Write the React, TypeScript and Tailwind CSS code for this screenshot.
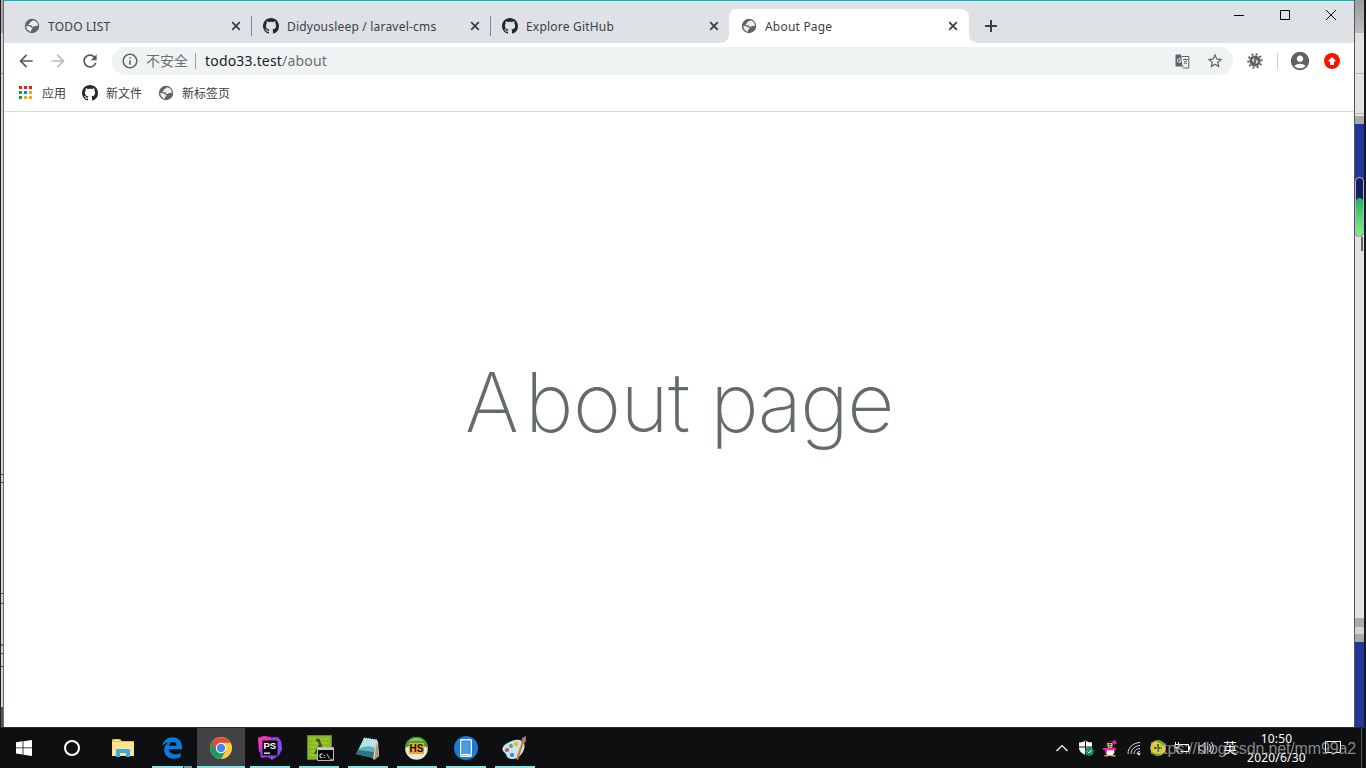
import React from 'react';
import {
    MdArrowBack,
    MdArrowForward,
    MdRefresh,
    MdInfoOutline,
    MdStarBorder,
    MdAccountCircle,
} from 'react-icons/md';

type Favicon = 'globe' | 'github';

interface TabItem {
    title: string;
    icon: Favicon;
    active?: boolean;
    divider?: boolean;
}

const tabs: TabItem[] = [
    { title: 'TODO LIST', icon: 'globe', divider: true },
    { title: 'Didyousleep / laravel-cms', icon: 'github', divider: true },
    { title: 'Explore GitHub', icon: 'github' },
    { title: 'About Page', icon: 'globe', active: true },
];

const appDots = [
    'bg-[#f51b0c]', 'bg-[#f51b0c]', 'bg-[#f51b0c]',
    'bg-[#0f9d58]', 'bg-[#0a84ff]', 'bg-[#ffa800]',
    'bg-[#0f9d58]', 'bg-[#ffa800]', 'bg-[#ffa800]',
];

const SiteIcon = ({ icon }: { icon: Favicon }) =>
    icon === 'globe' ? (
        <svg className="shrink-0" width="16" height="16" viewBox="0 0 16 16">
            <circle cx="8" cy="8" r="7.2" fill="#5f6368" />
            <path
                d="M8.800 2.300c-.3 1-1.300 1.200-2 1.500-.9.400-.6 1.200-1.100 1.600-.5.500-1.300.5-1.200 1.300.1.700 1.300.5 2.300.6 1.300.1 1.100 1.500 2 1.600 1.300.2 1.300-1 2.500-1h2.500c.5-2.600-1.700-5.100-5-5.600zM2.300 8c0 3.100 2.100 5.300 4.700 5.700V12c1.200-.2 1.600-1.200 1.300-1.900-.3-.7-1.200-.5-1.700-1C5.700 8.200 4.400 8 2.300 8z"
                fill="#eceef0"
            />
        </svg>
    ) : (
        <svg className="shrink-0" width="16" height="16" viewBox="0 0 16 16" fill="#24292e">
            <path d="M8 0C3.580 0 0 3.580 0 8c0 3.540 2.290 6.530 5.470 7.590.4.070.55-.17.55-.38 0-.19-.01-.82-.01-1.490-2.010.37-2.530-.49-2.690-.94-.09-.23-.48-.94-.82-1.130-.28-.15-.68-.52-.01-.53.63-.01 1.080.58 1.230.82.72 1.210 1.870.87 2.330.66.070-.52.28-.87.51-1.070-1.780-.2-3.640-.89-3.640-3.950 0-.87.31-1.590.82-2.150-.08-.2-.36-1.020.08-2.120 0 0 .67-.21 2.200.82.64-.18 1.320-.27 2-.27.68 0 1.360.09 2 .27 1.530-1.040 2.200-.82 2.200-.82.44 1.100.16 1.920.08 2.120.51.56.82 1.270.82 2.150 0 3.070-1.870 3.750-3.650 3.950.29.25.54.73.54 1.480 0 1.070-.01 1.930-.01 2.200 0 .21.15.46.55.38A8.013 8.013 0 0016 8c0-4.420-3.580-8-8-8z" />
        </svg>
    );

const CloseIcon = () => (
    <svg width="10" height="10" viewBox="0 0 10 10" stroke="#3c4043" strokeWidth="1.8">
        <path d="M1.2 1.2l7.6 7.6M8.8 1.2L1.2 8.8" />
    </svg>
);

const Tab = ({ tab }: { tab: TabItem }) => (
    <div
        className={`relative flex h-[34px] items-center pl-3 ${
            tab.active ? 'w-[240px] rounded-t-lg bg-white pr-[11px]' : 'w-[239px] pr-[10px]'
        }`}
    >
        {tab.active && (
            <>
                <span className="absolute -left-2 bottom-0 size-2 bg-[radial-gradient(circle_at_0_0,transparent_7.5px,white_8px)]" />
                <span className="absolute -right-2 bottom-0 size-2 bg-[radial-gradient(circle_at_100%_0,transparent_7.5px,white_8px)]" />
            </>
        )}
        <SiteIcon icon={tab.icon} />
        <span className="ml-2 grow whitespace-nowrap pt-[2px] text-[12px] leading-4 tracking-[0.2px] text-[#3c4043]">
            {tab.title}
        </span>
        <CloseIcon />
        {tab.divider && <span className="absolute right-[-1px] top-[7px] h-5 w-px bg-[#80868b]" />}
    </div>
);

const TabStrip = () => (
    <div className="flex h-[43px] items-end border-t border-[#00b8c4] bg-[#dee1e6] pl-2">
        {tabs.map((tab) => (
            <Tab key={tab.title} tab={tab} />
        ))}
        <svg className="mb-[11px] ml-4" width="12" height="12" viewBox="0 0 12 12" stroke="#3c4043" strokeWidth="2">
            <path d="M6 0v12M0 6h12" />
        </svg>
        <div className="ml-auto flex h-full pt-[8px]">
            <svg className="mr-9" width="10" height="11" stroke="#000" fill="none">
                <path d="M0 6.5h10" />
            </svg>
            <svg className="mr-9" width="10" height="11" stroke="#000" fill="none">
                <path d="M.5 1.5h9v9h-9z" />
            </svg>
            <svg className="mr-[18px]" width="10" height="11" stroke="#000" fill="none">
                <path d="M0 1l10 10M10 1L0 11" />
            </svg>
        </div>
    </div>
);

// Gear-like bug extension icon
const BugIcon = () => (
    <svg width="16" height="16" viewBox="0 0 16 16">
        <circle cx="8" cy="8" r="5.6" fill="#5f6368" />
        <g transform="rotate(-14 8 8)">
            <circle cx="8" cy="8" r="6.7" fill="none" stroke="#5f6368" strokeWidth="2" strokeDasharray="1.9 2.31" />
        </g>
        <path d="M7.300 5.600L5.600 7.300l1.500 1.500M8.800 10.400l1.700-1.700-1.500-1.500" fill="none" stroke="#fff" strokeWidth="1.1" />
    </svg>
);

const Toolbar = () => (
    <div className="flex h-9 items-center pl-3 pr-[14px]">
        <MdArrowBack size={20} className="text-[#55595e]" />
        <MdArrowForward size={20} className="ml-3 text-[#babcbe]" />
        <MdRefresh size={20} className="ml-3 text-[#55595e]" />
        <div className="ml-3 flex h-7 w-[1121px] items-center rounded-full bg-[#eff3f4] pl-[9px] pr-[9px]">
            <MdInfoOutline size={18} className="text-[#5f6368]" />
            <span className="ml-[7px] text-[14px] leading-5 text-[#6b6f73]">不安全</span>
            <span className="ml-[7px] h-4 w-px bg-[#9aa0a6]" />
            <span className="ml-[9px] text-[14px] leading-5 tracking-[0.18px] text-[#202124]">
                todo33.test<span className="text-[#6b6f73]">/about</span>
            </span>
            <svg className="ml-auto" width="15" height="15" viewBox="0 0 15 15">
                <path d="M1 .5h5l1.5 12H1.5A1 1 0 01.5 11.5V1z" fill="#5f6368" />
                <path d="M6.6 2.5h7.2v11.5H8.2" fill="none" stroke="#5f6368" />
                <path d="M5.8 5.1A2 2 0 104.3 8.6 2 2 0 006.1 7H4.3" fill="none" stroke="#fff" />
                <path d="M8 5.5h4.6M10.2 4.4v1.1M11.9 5.5c-.4 2-1.6 3.5-3 4.4M9 6.8c.7 1.5 1.8 2.5 3.2 3.1M7 13.5l1.4-1.8" fill="none" stroke="#5f6368" strokeWidth=".9" />
            </svg>
            <MdStarBorder size={18} className="ml-4 text-[#5f6368]" />
        </div>
        <span className="ml-[14px]"><BugIcon /></span>
        <span className="ml-[14px] h-4 w-px bg-[#c8cbce]" />
        <MdAccountCircle size={22} className="ml-[11px] text-[#5f6368]" />
        <svg className="ml-[13px]" width="16" height="16" viewBox="0 0 16 16">
            <circle cx="8" cy="8" r="8" fill="#f51400" />
            <path d="M8 4l4.2 4.2H10V12H6V8.2H3.8z" fill="#fff" />
        </svg>
    </div>
);

const BookmarkBar = () => (
    <div className="flex h-[33px] items-center border-b border-[#dadce0] pb-1 pl-[15px] text-[12px] leading-4 text-[#3c4043]">
        <div className="-mt-px grid grid-cols-3 gap-[2px]">
            {appDots.map((color, i) => (
                <span key={i} className={`size-[3px] ${color}`} />
            ))}
        </div>
        <span className="ml-[10px] pt-[2px]">应用</span>
        <span className="ml-4"><SiteIcon icon="github" /></span>
        <span className="ml-2 pt-[2px]">新文件</span>
        <span className="ml-4"><SiteIcon icon="globe" /></span>
        <span className="ml-2 pt-[2px]">新标签页</span>
    </div>
);

const BrowserWindow = () => (
    <div className="flex w-[1350px] flex-col bg-white">
        <TabStrip />
        <Toolbar />
        <BookmarkBar />
        <main className="flex grow justify-center pt-[241px]">
            <h1 className="whitespace-nowrap font-[Inter] text-[82px] font-extralight leading-[100px] text-[#636b6f] [word-spacing:-2px]">
                <span className="tracking-[6px]">A</span>
                <span className="tracking-[-0.5px]">bout </span>
                <span className="tracking-[-1.6px]">page</span>
            </h1>
        </main>
    </div>
);

// Slivers of the windows lying behind the browser
const LeftEdge = () => (
    <div className="flex w-1">
        <div className="w-px bg-[#24232b]" />
        <div className="flex w-[2px] flex-col bg-[#d6d2d1]">
            <div className="h-[33px] bg-[#aaa6a5]" />
            <div className="mt-10 h-px bg-[#9b9797]" />
            <div className="mt-[400px] h-px bg-[#444]" />
            <div className="mt-[7px] h-px bg-[#444]" />
            <div className="mt-[110px] h-px bg-[#444]" />
            <div className="mt-[9px] h-px bg-[#444]" />
            <div className="mt-10 h-[2px] bg-[#777]" />
            <div className="mt-[7px] h-px bg-[#555]" />
            <div className="mt-3 h-px bg-[#444]" />
            <div className="mt-auto h-5 bg-[#555]" />
        </div>
        <div className="w-px bg-[#6f6866]" />
    </div>
);

const RightEdge = () => (
    <div className="relative flex w-3 flex-col border-l border-r-2 border-l-[#555] border-r-[#18181d] bg-[#e2e2e3]">
        <div className="h-[33px] bg-gradient-to-b from-[#9d9d9d] to-[#bcbcbc]" />
        <div className="h-[41px] border-b border-[#b9b9b9]" />
        <div className="h-10 border-b border-[#b9b9b9]" />
        <div className="mt-[2px] h-2 bg-[#a9a9aa]" />
        <div className="h-[98px] bg-[#21359a]" />
        <div className="h-[396px]" />
        <div className="h-[9px] bg-[#a9a9a9]" />
        <div className="h-[7px] bg-[#d2d2d2]" />
        <div className="h-2 bg-[#a9a9a9]" />
        <div className="grow bg-[#21359a]" />
        <div className="absolute left-0 top-[177px] flex h-[60px] w-[9px] items-end rounded border border-[#aab3df] bg-[#132060]">
            <div className="h-[38px] w-full rounded-sm bg-gradient-to-b from-[#14b45c] to-[#84f080]" />
        </div>
        <div className="absolute left-[6px] top-[237px] h-[14px] w-[2px] bg-[#666]" />
    </div>
);

const WindowsIcon = () => (
    <svg width="16" height="16" viewBox="0 0 16 16" fill="#fff">
        <path d="M0 2.2l6.6-.9v6.2H0zM7.4 1.2L16 0v7.5H7.4zM0 8.3h6.6v6.2L0 13.6zM7.4 8.3H16V16l-8.6-1.3z" />
    </svg>
);

const ExplorerIcon = () => (
    <svg width="22" height="20" viewBox="0 0 22 20">
        <path d="M0 2a1 1 0 011-1h7l2 2h11a1 1 0 011 1v14H0z" fill="#eeb936" />
        <path d="M0 4h22v14H0z" fill="#fde391" />
        <path d="M2 2h5v1H2z" fill="#fff" />
        <path d="M4 19v-6.500a1.500 1.500 0 011.500-1.500h11a1.500 1.500 0 011.500 1.500V19h-4v-4H8v4z" fill="#36aee2" />
    </svg>
);

const EdgeIcon = () => (
    <svg width="20" height="22" viewBox="0 0 20 22">
        <path
            d="M.2 9.500C1.300 3.500 5.200.2 10.400.2 16.500.2 20 4.500 20 10v2.300H6.800c.2 3.400 3.200 5 6.200 5 2.200 0 4-.6 5.600-1.600v4.400c-2 1.200-4.200 1.700-6.700 1.700C6 21.800 2.200 18 2.200 13c0-3.300 1.900-6.200 4.900-7.700C4.200 5.600 1.700 7.200.2 9.500zM7 8.800h7.600C14.600 6.500 13.200 5 11 5 8.900 5 7.300 6.500 7 8.800z"
            fill="#0a7bdc"
        />
    </svg>
);

const ChromeIcon = () => (
    <svg width="22" height="22" viewBox="0 0 22 22">
        <circle cx="11" cy="11" r="11" fill="#ffcd40" />
        <path d="M11 11L1.500 5.500A11 11 0 0011 22l4.800-8.300z" fill="#169d59" />
        <path d="M1.500 5.500A11 11 0 0120.500 5.800H11L6.200 13.800z" fill="#dc4b3e" />
        <circle cx="11" cy="11" r="5.2" fill="#fff" />
        <circle cx="11" cy="11" r="4.2" fill="#4587f3" />
    </svg>
);

const PhpStormIcon = () => (
    <svg width="24" height="24" viewBox="0 0 24 24">
        <path d="M0 2l6-2 7 1.500L20 1l3 4 1 8-3 6-7 5-4-3-7 1z" fill="#9440f0" />
        <path d="M0 2l6-2 7 1.500-2 5-7 5-3 5z" fill="#ee36b4" />
        <path d="M20 4l3 1 1 8-3 6-5 3z" fill="#7a4cf2" />
        <path d="M4.500 4.500h15v15h-15z" fill="#080808" />
        <text x="5.5" y="13" fill="#fff" fontFamily="Liberation Sans" fontWeight="700" fontSize="9.5">PS</text>
        <path d="M6 16.500h6v1.300H6z" fill="#fff" />
    </svg>
);

const ConsoleIcon = () => (
    <svg className="ml-[3px]" width="27" height="26" viewBox="0 0 27 26">
        <path d="M.5.5h24v24H.5z" fill="#86b91f" stroke="#638b15" />
        <path d="M3 4h19M3 8h19M3 12h19M3 16h19M3 20h19" stroke="#a7d147" />
        <path d="M9 5h2.500L17 19M13 10L8 19" fill="none" stroke="#3b5411" strokeWidth="2.3" />
        <path d="M10.500 12.500h16v13h-16z" fill="#050505" stroke="#b8b8b8" />
        <path d="M11 13h15v2H11z" fill="#c9c9cb" />
        <text x="12" y="22.5" fill="#fff" fontFamily="DejaVu Sans Mono" fontWeight="700" fontSize="6">C:\_</text>
    </svg>
);

const NotepadIcon = () => (
    <svg width="24" height="23" viewBox="0 0 24 23">
        <path d="M7 2l15 2 1 15-5 4z" fill="#e9dfc8" />
        <path d="M21 4l2 15-5 4z" fill="#b69a6e" />
        <path d="M8 1l13 2-4 18L0 17z" fill="#62aebc" />
        <path d="M8 1l13 2-2 8C13 8 7 9 3 12z" fill="#b9e2e6" />
        <path d="M2 13l16 2-1 6L0 17z" fill="#2d7487" />
        <path d="M8 1l13 2" stroke="#eef6f7" strokeDasharray="1 1" />
    </svg>
);

const HsIcon = () => (
    <svg width="23" height="23" viewBox="0 0 23 23">
        <circle cx="11.5" cy="11.5" r="11.3" fill="#e8e7e2" />
        <path d="M.2 11A11.300 11.300 0 0122.800 11c-4-3-18-3-22.600 0z" fill="#48a326" />
        <path d="M4 5c4-5 11-5 15 0-4-2-11-2-15 0z" fill="#93d36c" />
        <path d="M4 6h15v11H4z" fill="#f3a52b" />
        <text x="4.5" y="15.3" fill="#111" fontFamily="Liberation Sans" fontWeight="700" fontSize="10">HS</text>
    </svg>
);

const PhoneIcon = () => (
    <svg width="24" height="24" viewBox="0 0 24 24">
        <circle cx="12" cy="12" r="12" fill="#197bd5" />
        <rect x="6.7" y="3.7" width="10.6" height="16.6" rx="1" fill="none" stroke="#fff" strokeWidth="1.4" />
        <path d="M8.200 5.500h7.600v12H8.200z" fill="#4d9de3" />
        <path d="M8 18.500h8" stroke="#fff" strokeWidth="1.4" />
    </svg>
);

const PaintIcon = () => (
    <svg width="25" height="25" viewBox="0 0 25 25">
        <path d="M13 4c6-1 10 2 9.500 7S17 24 9 23c-5-1-4-4-6-6S-.5 14 1 11 6 6 13 4z" fill="#c9e2ef" />
        <circle cx="5" cy="14" r="2" fill="#d94b42" />
        <circle cx="9" cy="10" r="2" fill="#55ac51" />
        <circle cx="14" cy="8" r="2.2" fill="#f0b622" />
        <circle cx="10" cy="19" r="2" fill="#397fc9" />
        <path d="M20 5l2 1-6 18-2-1z" fill="#d88125" />
        <path d="M19 6l1-4 4-2v5l-2 3z" fill="#a67d5b" />
    </svg>
);

const taskbarApps = [
    { name: 'explorer', icon: ExplorerIcon, running: false },
    { name: 'edge', icon: EdgeIcon, running: true, stacked: true },
    { name: 'chrome', icon: ChromeIcon, running: true, active: true },
    { name: 'phpstorm', icon: PhpStormIcon, running: true },
    { name: 'console', icon: ConsoleIcon, running: true },
    { name: 'notepad', icon: NotepadIcon, running: true },
    { name: 'hs', icon: HsIcon, running: true },
    { name: 'phone', icon: PhoneIcon, running: true },
    { name: 'paint', icon: PaintIcon, running: true },
];

const Tray = () => (
    <div className="ml-auto flex items-center text-white">
        <div className="flex items-center gap-2">
            <svg width="16" height="16" viewBox="0 0 16 16" fill="none" stroke="#fff" strokeWidth="1.2">
                <path d="M2.500 11L8 5.500l5.500 5.500" />
            </svg>
            <svg width="16" height="16" viewBox="0 0 16 16">
                <path d="M1 2.500c3 0 5-1 6.500-2C9 1.500 11 2.500 14 2.500V8c0 3-2.500 5-6.500 7C3.500 13 1 11 1 8z" fill="#fff" />
                <path d="M7.500 1v14M1 7h13" stroke="#111" />
                <circle cx="11.5" cy="11.5" r="4.3" fill="#149457" />
                <path d="M9.500 11.500l1.500 1.500 2.500-3" fill="none" stroke="#fff" />
            </svg>
            <svg width="16" height="17" viewBox="0 0 16 17">
                <path d="M9.500 1.500L13 0l2 3-3 2z" fill="#ff1ba8" />
                <path d="M4 5c0-5 8-5 8 0v3H4z" fill="#050505" stroke="#555" strokeWidth=".5" />
                <path d="M5.500 3h2v3h-2zM8.500 3h2v3h-2z" fill="#fff" />
                <path d="M6.500 4h1v1h-1zM8.500 4h1v1h-1z" fill="#111" />
                <ellipse cx="8" cy="11.500" rx="4.500" ry="4.200" fill="#fff" />
                <path d="M5.500 6.300h5v1.200h-5zM2.500 15h4v1.500h-4zM9.500 15h4v1.500h-4z" fill="#ff9a14" />
                <path d="M1 8h13v2L8 10.500 5 10v3H3v-3H1z" fill="#ff1ba8" />
            </svg>
            <svg width="16" height="16" viewBox="0 0 16 16" fill="none" stroke="#ddd">
                <path d="M2 14C2 7 7 3 14 2.500M5 14c0-5 4-8 9-8.500M8 14c0-3 2-5 6-5.500M11 14c0-1.500 1-2.500 3-2.500" />
                <circle cx="13" cy="14" r="1" fill="#fff" />
            </svg>
            <svg width="16" height="16" viewBox="0 0 16 16">
                <circle cx="8" cy="8" r="7.7" fill="#f4ce17" />
                <path d="M5 1a8 8 0 0110.500 7c-3-4-7-6-10.500-7zM1 11c4 3 8 4 12 2-4 4-10 3-12-2z" fill="#57ad24" />
                <path d="M8 4v8M4 8h8" stroke="#256f1a" strokeWidth="2" />
            </svg>
            <svg width="16" height="16" viewBox="0 0 16 16" fill="none" stroke="#fff">
                <path d="M5.500 4.500h9v7h-8M14.500 6.500h1v3h-1M1 4.500h4v3H1zM1.500 2v2.500M4.500 2v2.500M3 7.500V12h2" />
            </svg>
            <svg width="16" height="16" viewBox="0 0 16 16" fill="none" stroke="#fff">
                <path d="M1 6h2.500L7 2.500v11L3.500 10H1zM9 6c1 1 1 3 0 4M11 4c2 2 2 6 0 8M13 2c3 3 3 9 0 12" />
            </svg>
        </div>
        <span className="ml-[9px] text-[14px] leading-5">英</span>
        <div className="ml-[8px] flex w-[63px] flex-col items-center text-[12px] leading-[19px] tracking-[0.2px]">
            <span>10:50</span>
            <span>2020/6/30</span>
        </div>
        <svg className="ml-[17px] mr-5" width="16" height="16" viewBox="0 0 16 16" fill="none" stroke="#fff">
            <path d="M.5 1.500h15v11H10l-2 2-2-2H.5z" />
        </svg>
        <span className="mr-1 h-full w-px bg-[#555]" />
    </div>
);

const Taskbar = () => (
    <footer className="relative flex h-[41px] border-t border-[#292a2c] bg-[#0e0f11]">
        <div className="flex w-[49px] items-center pl-4"><WindowsIcon /></div>
        <div className="flex w-[49px] items-center pl-[15px]">
            <span className="size-4 rounded-full border-[2px] border-white" />
        </div>
        {taskbarApps.map(({ name, icon: Icon, running, active, stacked }) => (
            <div
                key={name}
                className={`relative flex w-[49px] items-center justify-center ${
                    active ? 'border-l border-[#0e0f11] bg-[#414245]' : ''
                }`}
            >
                <Icon />
                {running && (
                    <span className={`absolute bottom-0 h-[2px] bg-[#83e3e6] ${active ? 'inset-x-0' : 'left-[5px] w-10'}`} />
                )}
                {stacked && <span className="absolute bottom-0 right-1 h-[2px] w-[9px] border-l border-[#263c3d] bg-[#64a9ac]" />}
            </div>
        ))}
        <Tray />
        <span className="absolute right-[10px] top-[11px] whitespace-nowrap font-['Liberation_Sans'] text-[16px] leading-5 tracking-[-0.14px] text-[#b4b4b4]/75">
            https://blog.csdn.net/mm99a2
        </span>
    </footer>
);

export default function App() {
    return (
        <div className="flex h-[768px] w-[1366px] flex-col overflow-hidden font-['Noto_Sans','Noto_Sans_CJK_SC',sans-serif]">
            <div className="flex h-[727px]">
                <LeftEdge />
                <BrowserWindow />
                <RightEdge />
            </div>
            <Taskbar />
        </div>
    );
}
